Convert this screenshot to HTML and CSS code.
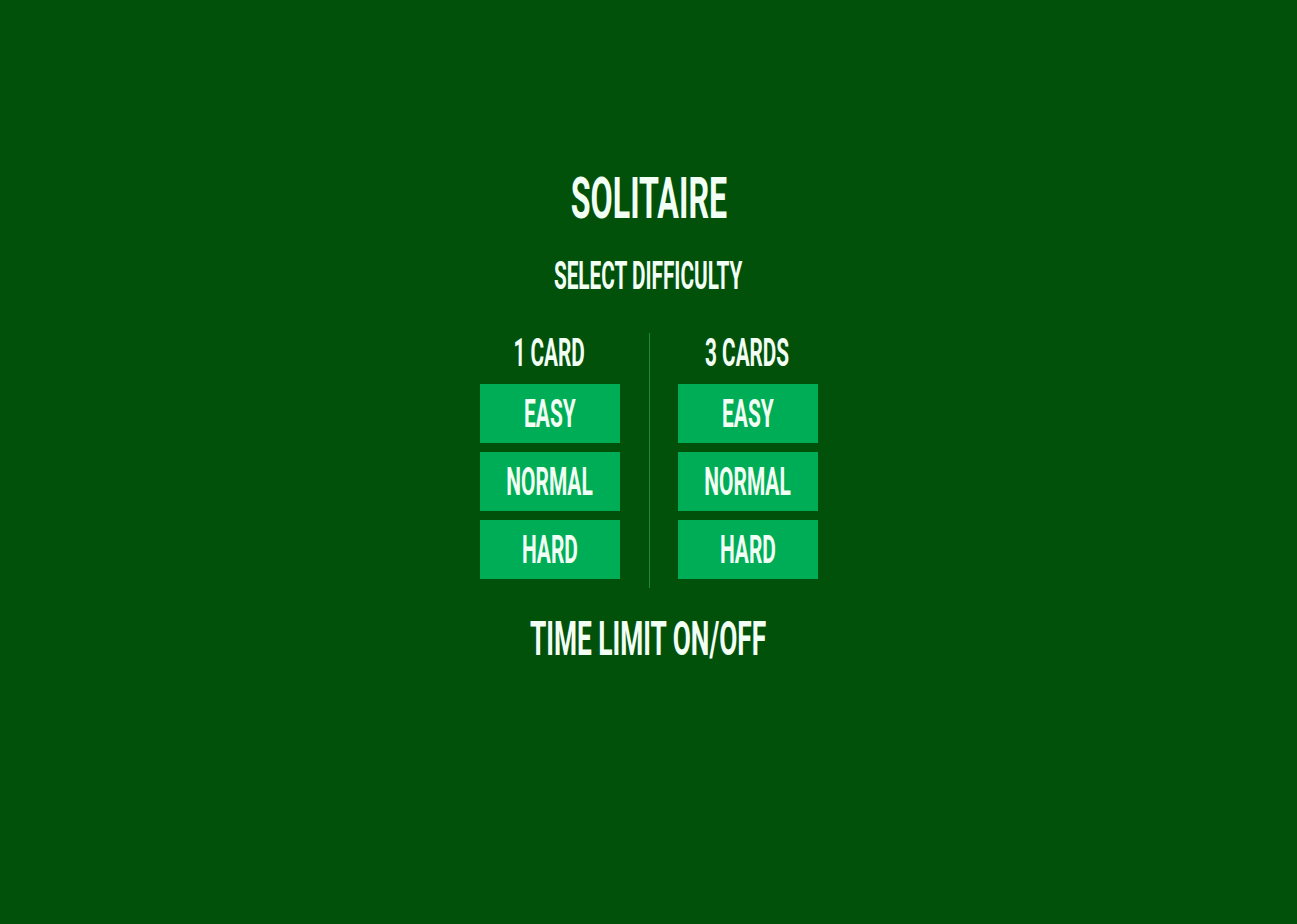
FILE: index.html
```html
<!DOCTYPE html>
<html>
<head>
<meta charset="utf-8">
<title>Solitaire</title>
<link rel="stylesheet" href="styles.css">
</head>
<body>
<main class="menu">
  <h1 class="title"><span class="sq sq-title">SOLITAIRE</span></h1>
  <h2 class="subtitle"><span class="sq sq-sub">SELECT DIFFICULTY</span></h2>
  <div class="modes">
    <section class="mode">
      <h3 class="mode-head"><span class="sq sq-sub">1 CARD</span></h3>
      <button class="btn"><span class="sq sq-btn">EASY</span></button>
      <button class="btn"><span class="sq sq-btn">NORMAL</span></button>
      <button class="btn"><span class="sq sq-btn">HARD</span></button>
    </section>
    <div class="divider"></div>
    <section class="mode">
      <h3 class="mode-head"><span class="sq sq-sub">3 CARDS</span></h3>
      <button class="btn"><span class="sq sq-btn">EASY</span></button>
      <button class="btn"><span class="sq sq-btn">NORMAL</span></button>
      <button class="btn"><span class="sq sq-btn">HARD</span></button>
    </section>
  </div>
  <div class="timelimit"><span class="sq sq-time">TIME LIMIT ON/OFF</span></div>
</main>
</body>
</html>
```
FILE: styles.css
```css
html, body {
  margin: 0;
  padding: 0;
  height: 100%;
}
body {
  background: #02510b;
  color: #f2fff4;
  font-family: Roboto, "Liberation Sans", sans-serif;
  font-weight: 700;
}
.menu {
  display: flex;
  flex-direction: column;
  align-items: center;
  padding-top: 169px;
}
.title, .subtitle, .mode-head, .timelimit {
  margin: 0;
  font-weight: 700;
  display: flex;
  justify-content: center;
  width: 300px;
}
.sq {
  display: inline-block;
  flex: none;
  transform-origin: center;
  white-space: nowrap;
}
.title {
  font-size: 58px;
  line-height: 58px;
  height: 58px;
}
.sq-title { transform: scaleX(0.555); }
.subtitle {
  margin-top: 30px;
  font-size: 39px;
  line-height: 39px;
  height: 39px;
}
.sq-sub { transform: scaleX(0.532); }
.modes {
  margin-top: 37px;
  display: flex;
  align-items: stretch;
}
.mode {
  width: 140px;
  display: flex;
  flex-direction: column;
  gap: 9px;
  padding: 1px 0 9px;
}
.mode:first-child { margin-right: 29px; }
.mode:last-child { margin-left: 28px; }
.mode-head {
  width: 140px;
  font-size: 39px;
  line-height: 39px;
  height: 39px;
  margin-bottom: 2px;
}
.divider {
  width: 1px;
  background: #1c8a3c;
}
.btn {
  height: 59px;
  border: 0;
  padding: 0;
  margin: 0;
  background: #00ad57;
  color: #f2fff4;
  font-family: inherit;
  font-weight: 700;
  font-size: 38px;
  line-height: 38px;
  display: flex;
  align-items: center;
  justify-content: center;
}
.sq-btn { transform: scaleX(0.55); }
.timelimit {
  margin-top: 26px;
  font-size: 49px;
  line-height: 49px;
  height: 49px;
}
.sq-time { transform: scaleX(0.537); }
```
